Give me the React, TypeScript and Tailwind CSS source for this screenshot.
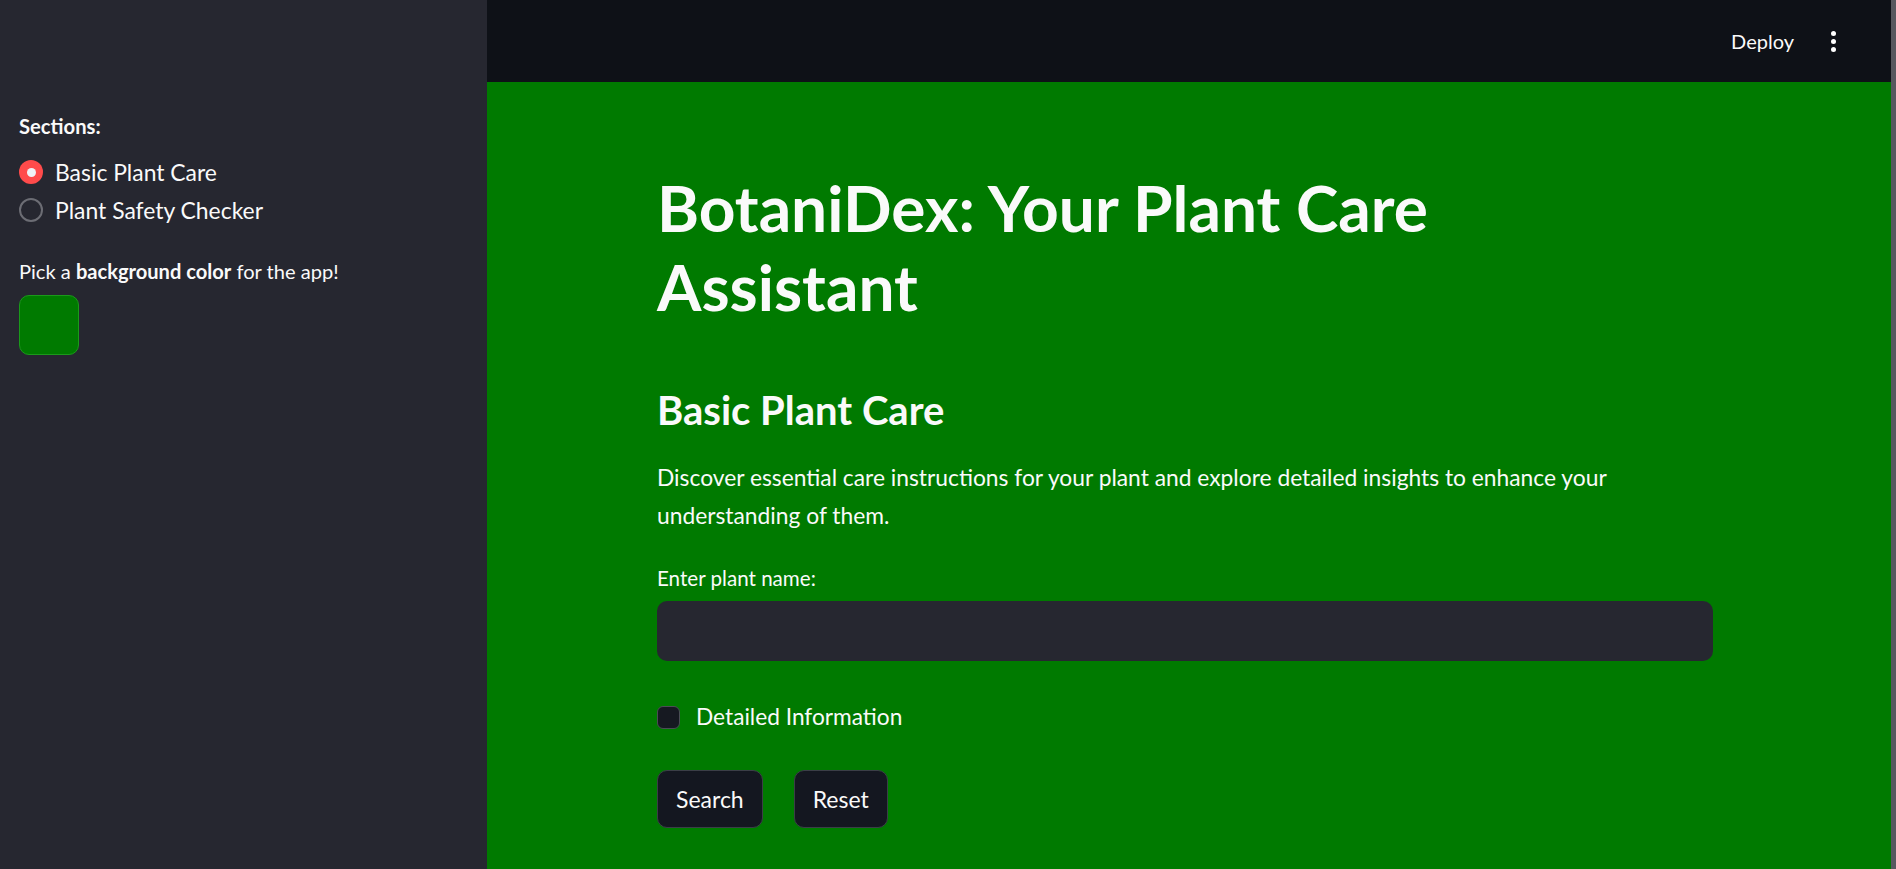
import { useState } from "react";

const font = { fontFamily: "Lato, 'Noto Sans', sans-serif" };

export default function App() {
  const [section, setSection] = useState<"basic" | "safety">("basic");
  const [plant, setPlant] = useState("");
  const [detailed, setDetailed] = useState(false);

  return (
    <div className="flex h-[869px] w-full overflow-hidden text-[#fafafa]" style={font}>
      {/* Sidebar */}
      <aside className="w-[487px] shrink-0 bg-[#262730] pl-[19px] pt-[112px]">
        <p className="text-[20.2px] leading-[28px] font-bold">Sections:</p>

        <div className="mt-[13px] flex flex-col">
          {[
            { id: "basic", label: "Basic Plant Care" },
            { id: "safety", label: "Plant Safety Checker" },
          ].map((opt) => (
            <button
              key={opt.id}
              onClick={() => setSection(opt.id as "basic" | "safety")}
              className="flex h-[38px] items-center gap-[12px] text-left"
            >
              {section === opt.id ? (
                <span className="flex h-[24px] w-[24px] items-center justify-center rounded-full bg-[#ff4b4b]">
                  <span className="h-[9px] w-[9px] rounded-full bg-[#f0f2f6]" />
                </span>
              ) : (
                <span className="h-[24px] w-[24px] rounded-full border-2 border-[#6c6d74]" />
              )}
              <span className="text-[22.9px] leading-[28px]">{opt.label}</span>
            </button>
          ))}
        </div>

        <p className="mt-[28px] text-[20.1px] leading-[28px]">
          Pick a <span className="font-bold">background color</span> for the app!
        </p>
        <div className="mt-[10px] h-[60px] w-[60px] rounded-[10px] border border-[#1a9a1a] bg-[#007a00]" />
      </aside>

      {/* Main */}
      <main className="flex min-w-0 flex-1 flex-col">
        <header className="flex h-[82px] shrink-0 items-center justify-end bg-[#0e1117] pr-[55px]">
          <button className="text-[20px] leading-[28px]">Deploy</button>
          <button className="ml-[37px] flex flex-col items-center gap-[3px]">
            <span className="h-[5px] w-[5px] rounded-full bg-white" />
            <span className="h-[5px] w-[5px] rounded-full bg-white" />
            <span className="h-[5px] w-[5px] rounded-full bg-white" />
          </button>
        </header>

        <section className="flex-1 bg-[#007a00] pl-[170px]">
          <div className="w-[1056px] pt-[86px]">
            <h1 className="max-w-[1000px] text-[64px] leading-[79px] font-bold">
              BotaniDex: Your Plant Care Assistant
            </h1>

            <h3 className="mt-[62px] text-[40px] leading-[44px] font-bold">Basic Plant Care</h3>

            <p className="mt-[26px] text-[22.8px] leading-[38px]">
              Discover essential care instructions for your plant and explore detailed insights to enhance your
              understanding of them.
            </p>

            <label className="mt-[30px] block text-[20.6px] leading-[28px]">Enter plant name:</label>
            <input
              value={plant}
              onChange={(e) => setPlant(e.target.value)}
              className="mt-[9px] block h-[60px] w-full rounded-[10px] bg-[#262730] px-4 text-[22px] outline-none"
            />

            <label className="mt-[40px] flex h-[32px] cursor-pointer items-center gap-[16px]">
              <input
                type="checkbox"
                checked={detailed}
                onChange={(e) => setDetailed(e.target.checked)}
                className="h-[23px] w-[23px] appearance-none rounded-[6px] border border-[#4b4d55] bg-[#161921] checked:bg-[#ff4b4b]"
              />
              <span className="text-[22.7px] leading-[28px]">Detailed Information</span>
            </label>

            <div className="mt-[37px] flex gap-[31px]">
              <button className="h-[58px] rounded-[10px] border border-[#3b3e47] bg-[#141720] px-[18px] text-[23px]">
                Search
              </button>
              <button className="h-[58px] rounded-[10px] border border-[#3b3e47] bg-[#141720] px-[18px] text-[23px]">
                Reset
              </button>
            </div>
          </div>
        </section>
      </main>

      {/* scrollbar strip */}
      <div className="w-[5px] shrink-0 bg-[#57585f]" />
    </div>
  );
}
